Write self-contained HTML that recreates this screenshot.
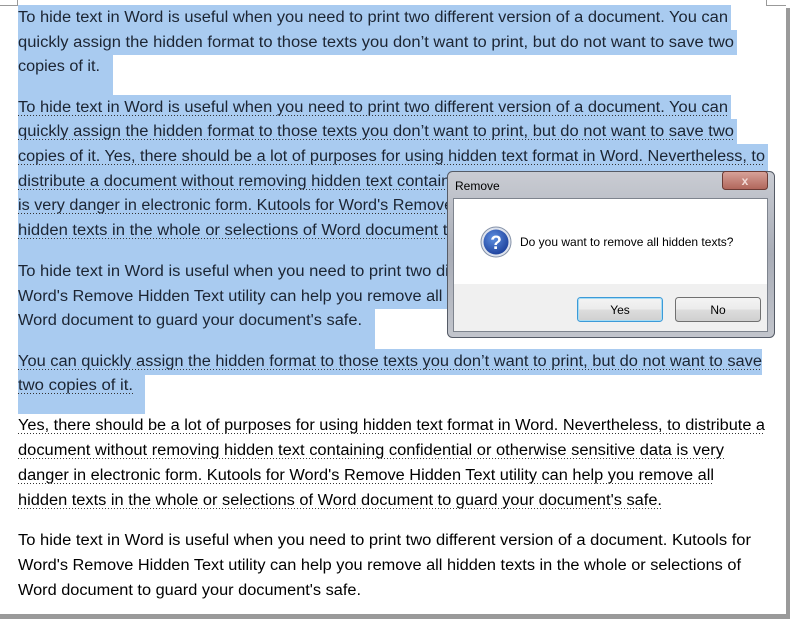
<!DOCTYPE html>
<html><head><meta charset="utf-8"><style>
html,body{margin:0;padding:0;width:792px;height:619px;overflow:hidden;background:#fff}
svg text{font-family:"Liberation Sans",sans-serif;font-size:15.5px}
</style></head><body>
<svg width="792" height="619" viewBox="0 0 792 619" xmlns="http://www.w3.org/2000/svg" style="position:absolute;left:0;top:0">
<!-- page edges -->
<rect x="785" y="8" width="5" height="611" fill="#9a9a9a"/>
<rect x="0" y="614" width="790" height="5" fill="#9a9a9a"/>
<rect x="0" y="0" width="786" height="614" fill="#fff"/>
<path d="M0 5.5H17.5V0" fill="none" stroke="#999" stroke-width="1"/>
<path d="M766.5 0V5.5H786" fill="none" stroke="#999" stroke-width="1"/>
<!-- highlights -->
<g fill="#a9cbf0">
<rect x="18" y="5" width="713" height="25"/>
<rect x="18" y="30" width="719" height="25"/>
<rect x="18" y="55" width="95" height="40"/>
<rect x="18" y="95" width="713" height="24"/>
<rect x="18" y="119" width="719" height="25"/>
<rect x="18" y="144" width="750" height="24"/>
<rect x="18" y="168" width="750" height="25"/>
<rect x="18" y="193" width="750" height="25"/>
<rect x="18" y="218" width="660" height="41"/>
<rect x="18" y="259" width="750" height="25"/>
<rect x="18" y="284" width="735" height="25"/>
<rect x="18" y="309" width="357" height="40"/>
<rect x="18" y="349" width="744" height="26"/>
<rect x="18" y="375" width="127" height="39"/>
</g>
<!-- text -->
<g fill="#1c2533" lengthAdjust="spacingAndGlyphs">
<text x="18" y="22" textLength="710" lengthAdjust="spacingAndGlyphs">To hide text in Word is useful when you need to print two different version of a document. You can</text>
<text x="18" y="47" textLength="716" lengthAdjust="spacingAndGlyphs">quickly assign the hidden format to those texts you don’t want to print, but do not want to save two</text>
<text x="18" y="71" textLength="82" lengthAdjust="spacingAndGlyphs">copies of it.</text>
<text x="18" y="112" textLength="710" lengthAdjust="spacingAndGlyphs">To hide text in Word is useful when you need to print two different version of a document. You can</text>
<text x="18" y="136" textLength="716" lengthAdjust="spacingAndGlyphs">quickly assign the hidden format to those texts you don’t want to print, but do not want to save two</text>
<text x="18" y="161" textLength="747" lengthAdjust="spacingAndGlyphs">copies of it. Yes, there should be a lot of purposes for using hidden text format in Word. Nevertheless, to</text>
<text x="18" y="186" textLength="744" lengthAdjust="spacingAndGlyphs">distribute a document without removing hidden text containing confidential or otherwise sensitive data</text>
<text x="18" y="210" textLength="742" lengthAdjust="spacingAndGlyphs">is very danger in electronic form. Kutools for Word's Remove Hidden Text utility can help you remove all</text>
<text x="18" y="235" textLength="652" lengthAdjust="spacingAndGlyphs">hidden texts in the whole or selections of Word document to guard your document's safe.</text>
<text x="18" y="276" textLength="733" lengthAdjust="spacingAndGlyphs">To hide text in Word is useful when you need to print two different version of a document. Kutools for</text>
<text x="18" y="301" textLength="723" lengthAdjust="spacingAndGlyphs">Word's Remove Hidden Text utility can help you remove all hidden texts in the whole or selections of</text>
<text x="18" y="325" textLength="344" lengthAdjust="spacingAndGlyphs">Word document to guard your document's safe.</text>
<text x="18" y="366" textLength="744" lengthAdjust="spacingAndGlyphs">You can quickly assign the hidden format to those texts you don’t want to print, but do not want to save</text>
<text x="18" y="390" textLength="115" lengthAdjust="spacingAndGlyphs">two copies of it.</text>
</g>
<g fill="#000">
<text x="18" y="430" textLength="747" lengthAdjust="spacingAndGlyphs">Yes, there should be a lot of purposes for using hidden text format in Word. Nevertheless, to distribute a</text>
<text x="18" y="455" textLength="706" lengthAdjust="spacingAndGlyphs">document without removing hidden text containing confidential or otherwise sensitive data is very</text>
<text x="18" y="480" textLength="696" lengthAdjust="spacingAndGlyphs">danger in electronic form. Kutools for Word's Remove Hidden Text utility can help you remove all</text>
<text x="18" y="505" textLength="644" lengthAdjust="spacingAndGlyphs">hidden texts in the whole or selections of Word document to guard your document's safe.</text>
<text x="18" y="545" textLength="733" lengthAdjust="spacingAndGlyphs">To hide text in Word is useful when you need to print two different version of a document. Kutools for</text>
<text x="18" y="570" textLength="723" lengthAdjust="spacingAndGlyphs">Word's Remove Hidden Text utility can help you remove all hidden texts in the whole or selections of</text>
<text x="18" y="595" textLength="343" lengthAdjust="spacingAndGlyphs">Word document to guard your document's safe.</text>
</g>
<!-- dotted underlines -->
<g stroke="#333" stroke-width="1" stroke-dasharray="1 2">
<path d="M18 115.5H728M18 139.5H734M18 164.5H765M18 189.5H762M18 213.5H760M18 238.5H670"/>
<path d="M18 369.5H762M18 393.5H133"/>
<path d="M18 433.5H765M18 458.5H724M18 483.5H714M18 508.5H662"/>
</g>
<!-- dialog -->
<defs>
<linearGradient id="tb" x1="0" y1="0" x2="0" y2="1"><stop offset="0" stop-color="#c9ccd3"/><stop offset="0.5" stop-color="#a9adb7"/><stop offset="1" stop-color="#c2c5cc"/></linearGradient>
<linearGradient id="cl" x1="0" y1="0" x2="0" y2="1"><stop offset="0" stop-color="#d8a39a"/><stop offset="1" stop-color="#b0655a"/></linearGradient>
<linearGradient id="bt" x1="0" y1="0" x2="0" y2="1"><stop offset="0" stop-color="#f4f4f4"/><stop offset="0.5" stop-color="#ebebeb"/><stop offset="0.5" stop-color="#dddddd"/><stop offset="1" stop-color="#cfcfcf"/></linearGradient>
<radialGradient id="q" cx="0.4" cy="0.35" r="0.7"><stop offset="0" stop-color="#5e8fe0"/><stop offset="1" stop-color="#1c3f9a"/></radialGradient>
</defs>
<rect x="447.5" y="171.5" width="327" height="166" rx="5" fill="url(#tb)" stroke="#555b66"/>
<rect x="453.5" y="198.5" width="314" height="133" fill="#f0f0f0" stroke="#7e848e"/>
<rect x="454" y="199" width="313" height="85" fill="#fff"/>
<text x="455" y="190" style="font-size:12px" fill="#000">Remove</text>
<rect x="722.5" y="171.5" width="45" height="18" rx="3" fill="url(#cl)" stroke="#6b3b35"/>
<text x="745" y="185" text-anchor="middle" style="font-size:12px;font-weight:bold" fill="#f3dcd8">x</text>
<circle cx="496" cy="242" r="15" fill="#dfe4ee" stroke="#8592a8"/>
<circle cx="496" cy="242" r="12.5" fill="url(#q)"/>
<text x="496" y="249" text-anchor="middle" style="font-size:19px;font-weight:bold" fill="#fff">?</text>
<text x="520" y="246" style="font-size:12px" fill="#000">Do you want to remove all hidden texts?</text>
<rect x="577.5" y="297.5" width="85" height="24" rx="3" fill="url(#bt)" stroke="#3c9ad8"/>
<rect x="578.5" y="298.5" width="83" height="22" rx="2" fill="none" stroke="#a6dcf4"/>
<text x="620" y="314" text-anchor="middle" style="font-size:12px" fill="#000">Yes</text>
<rect x="675.5" y="297.5" width="85" height="24" rx="3" fill="url(#bt)" stroke="#707070"/>
<text x="718" y="314" text-anchor="middle" style="font-size:12px" fill="#000">No</text>
</svg>
</body></html>
